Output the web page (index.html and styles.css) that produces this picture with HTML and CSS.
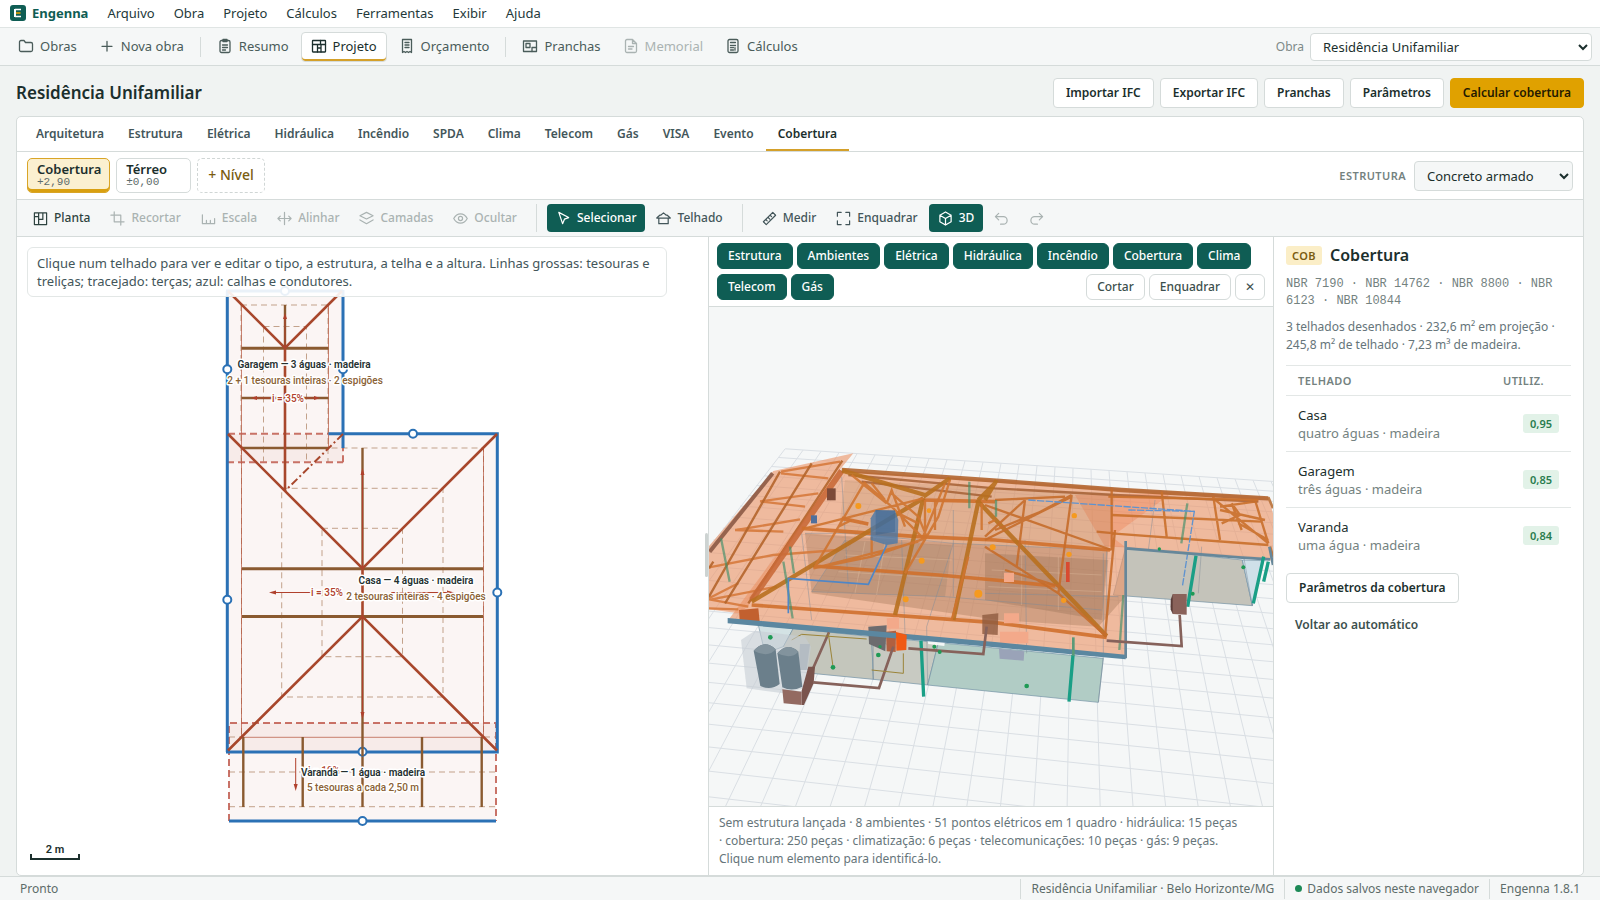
FILE: index.html
```html
<!DOCTYPE html>
<html lang="pt-BR">
<head>
<meta charset="utf-8">
<title>Engenna — Residência Unifamiliar</title>
<link rel="stylesheet" href="styles.css">
</head>
<body>
<div class="app">
  <nav class="menubar">
    <a class="brand" href="#"><svg class="logo" viewBox="0 0 16 16"><rect width="16" height="16" rx="3" fill="#0f5d54"/><path d="M5 4v8" stroke="#fff" stroke-width="2"/><path d="M5 4.500h6M5 11.500h6" stroke="#fff" stroke-width="1.500"/><path d="M6 8h4.500" stroke="#e0a100" stroke-width="1.600"/></svg>Engenna</a>
    <button>Arquivo</button><button>Obra</button><button>Projeto</button><button>Cálculos</button><button>Ferramentas</button><button>Exibir</button><button>Ajuda</button>
  </nav>

  <header class="toolbar">
    <button class="tool"><svg viewBox="0 0 16 16"><path d="M1.500 4a1.500 1.500 0 0 1 1.500-1.500h3l1.500 2H13A1.500 1.500 0 0 1 14.500 6v6a1.500 1.500 0 0 1-1.500 1.500H3A1.500 1.500 0 0 1 1.500 12z"/></svg>Obras</button>
    <button class="tool"><svg viewBox="0 0 16 16"><path d="M8 3.500v9.500M3 8.300h10"/></svg>Nova obra</button>
    <span class="sep"></span>
    <button class="tool"><svg viewBox="0 0 16 16"><rect x="3" y="2.500" width="10" height="12" rx="1.500"/><path d="M6 1.500h4v2H6zM5.500 7h5M5.500 9.500h5M5.500 12h3"/></svg>Resumo</button>
    <button class="tool active"><svg viewBox="0 0 16 16"><rect x="1.500" y="2.500" width="13" height="11.500" rx=".5"/><path d="M1.500 6.500h13M6.500 6.500V14M9.500 2.500v4M6.500 10h3.500M10 6.500V14"/></svg>Projeto</button>
    <button class="tool"><svg viewBox="0 0 16 16"><path d="M3.500 1.500h9v13l-1.500-1-1.500 1-1.500-1-1.500 1-1.500-1-1.500 1zM6 4.500h4M6 7h4M6 9.500h4"/></svg>Orçamento</button>
    <span class="sep"></span>
    <button class="tool"><svg viewBox="0 0 16 16"><rect x="1.500" y="3" width="13" height="10.500"/><path d="M4 5.500h4v4H4zM10 13.500v-4h4.500"/></svg>Pranchas</button>
    <button class="tool" disabled><svg viewBox="0 0 16 16"><path d="M2.500 3a1.500 1.500 0 0 1 1.500-1.500h5.500l4 4V13a1.500 1.500 0 0 1-1.500 1.500H4A1.500 1.500 0 0 1 2.500 13zM9.500 1.500v4h4M5.500 8.500h5M5.500 11h3.500"/></svg>Memorial</button>
    <button class="tool"><svg viewBox="0 0 16 16"><rect x="3" y="1.500" width="10" height="13" rx="1.500"/><path d="M5.500 4.500h5M5.500 7.500h1M7.500 7.500h1M9.500 7.500h1M5.500 9.700h1M7.500 9.700h1M10 9.700v2.500M5.500 12h3"/></svg>Cálculos</button>
    <label class="obra-label" for="obra">Obra</label>
    <select id="obra" class="obra-select"><option>Residência Unifamiliar</option></select>
  </header>

  <main class="page">
    <div class="page-head">
      <h1>Residência Unifamiliar</h1>
      <button class="btn">Importar IFC</button><button class="btn">Exportar IFC</button><button class="btn">Pranchas</button><button class="btn">Parâmetros</button><button class="btn primary">Calcular cobertura</button>
    </div>

    <section class="card">
      <div class="tabs">
        <button>Arquitetura</button><button>Estrutura</button><button>Elétrica</button><button>Hidráulica</button><button>Incêndio</button><button>SPDA</button><button>Clima</button><button>Telecom</button><button>Gás</button><button>VISA</button><button>Evento</button><button class="on">Cobertura</button>
      </div>

      <div class="levels">
        <button class="level on"><b>Cobertura</b><span>+2,90</span></button>
        <button class="level"><b>Térreo</b><span>±0,00</span></button>
        <button class="level-add">+ Nível</button>
        <label class="caps levels-label" for="estrutura">Estrutura</label>
        <select id="estrutura" class="estrutura-select"><option>Concreto armado</option></select>
      </div>

      <div class="tools">
        <button class="strong"><svg viewBox="0 0 16 16"><path d="M1.500 2h13v12.500h-13zM6 2v12.500M6 9h4.500V2M1.500 6H6"/></svg>Planta</button>
        <button disabled><svg viewBox="0 0 16 16"><path d="M4.500 1v10.500H15M1 4.500h10.500V15"/></svg>Recortar</button>
        <button disabled><svg viewBox="0 0 16 16"><path d="M1.500 4v9.500h13V8M5.800 13.500V10M10 13.500V10"/></svg>Escala</button>
        <button disabled><svg viewBox="0 0 16 16"><path d="M8 1.500v13M1 8h14M3.500 5.500 1 8l2.500 2.500M12.500 5.500 15 8l-2.500 2.500"/></svg>Alinhar</button>
        <button disabled><svg viewBox="0 0 16 16"><path d="M8 1.500 15 5 8 8.500 1 5zM1 9.500l7 4 7-4"/></svg>Camadas</button>
        <button disabled><svg viewBox="0 0 16 16"><path d="M.8 8S3.500 3 8 3s7.200 5 7.200 5-2.700 5-7.200 5S.8 8 .8 8z"/><circle cx="8" cy="8" r="2.200"/></svg>Ocultar</button>
        <span class="sep"></span>
        <button class="on"><svg viewBox="0 0 16 16"><path d="M3 1.500 13.500 7 9 8.700 7 13.500z"/></svg>Selecionar</button>
        <button><svg viewBox="0 0 16 16"><path d="M.8 7.500 4 4.500h1L8 2l3 2.500h1l3.200 3zM3 7.500v6h10v-6"/></svg>Telhado</button>
        <span class="sep"></span>
        <button><svg viewBox="0 0 16 16"><path d="m1.500 11.500 10-10 3 3-10 10zM4 9l1.500 1.500M6.300 6.700l2 2M8.700 4.500 10.200 6"/></svg>Medir</button>
        <button><svg viewBox="0 0 16 16"><path d="M1.500 5.500v-4h4M10.500 1.500h4v4M14.500 10.500v4h-4M5.500 14.500h-4v-4"/></svg>Enquadrar</button>
        <button class="on"><svg viewBox="0 0 16 16"><path d="m8 1 6 3.500v7L8 15l-6-3.500v-7zM2 4.500 8 8l6-3.500M8 8v7"/></svg>3D</button>
        <button disabled aria-label="Desfazer"><svg viewBox="0 0 16 16"><path d="M5 2.500 1.500 6 5 9.500M1.500 6H10a4 4 0 0 1 0 8H7"/></svg></button>
        <button disabled aria-label="Refazer"><svg viewBox="0 0 16 16"><path d="M11 2.500 14.500 6 11 9.500M14.500 6H6a4 4 0 0 0 0 8h3"/></svg></button>
      </div>

      <div class="work">
        <div class="plan">
          <svg class="plan-svg" viewBox="17 237 691 638" preserveAspectRatio="xMinYMin meet">
            <g class="fill"><path d="M227 291h116v171H227zM227 434h270v318H227zM229 723h267v98H229z"/><path d="M227 434h116v28H227zM229 723h267v29H229z"/></g>
            <g class="purlin">
              <path d="M241 305h87v157M241 305v157M263.500 326.500h43v135M263.500 326.500v135"/>
              <path d="M241.500 448h242v289M241.500 448v289M281.700 488.300H443V697H281.700zM322 528.300h80.500v128.400H322z"/>
              <path d="M229 737h13M484 737h12M229 772h267M229 806.700h267"/>
            </g>
            <path class="thin" d="M241.500 448v289M483.500 448v289M241.500 305v143M328.500 305v143M241.500 737.300h242"/>
            <path class="eave" d="M228 433.700h100M227 462.300h116M343 462.300V448M229 821v-98h267v98"/>
            <path class="gutter" d="M227.300 291v461M226 291h117M343 290v158M328.500 433.700h168.800V752H226M229 821h267"/>
            <path class="truss3" d="M241.500 348.300h87M242 568.700h241M242 616.500h241"/>
            <path class="truss2" d="M285 305v43M241.500 398h87M241.500 448h87M362.500 448v121M362.500 616v121"/>
            <path class="truss2" d="M243.300 737v70M302.700 737v70M362.500 737v70M422 737v70M481.700 737v70"/>
            <path class="hip" d="m228 291 57 57 57-57M228 434l134.500 134.500L497 434M228 750.500l134.500-134L497 750.500M285 348v143M362.500 568v48"/>
            <path class="valley" d="m343 434-58 57"/>
            <path class="slope" d="M311 592.500h-36M391 592.500h58M362.500 568v-94M362.500 616v96M295.700 758v28M285 348v-30M272 398h-15M304 398h10"/>
            <path class="head" d="m269 592.500 7-2v4zM454 592.500l-7-2v4zM362.500 468l-2 7h4zM362.500 719l-2-7h4zM295.700 791l-2-7h4zM285 313l-2 6h4zM251 398l6-2v4zM320 398l-6-2v4z"/>
            <g class="knob"><circle cx="285" cy="291" r="4"/><circle cx="227.300" cy="369.300" r="4"/><circle cx="343" cy="369.300" r="4"/><circle cx="413" cy="433.700" r="4"/><circle cx="227.300" cy="599.700" r="4"/><circle cx="497.300" cy="592.500" r="4"/><circle cx="362.500" cy="751.700" r="4"/><circle cx="362.500" cy="821" r="4"/></g>
            <path class="truss1" d="M362.500 747v9"/>
            <g class="tag">
              <text class="inc" x="288" y="402">i = 35%</text>
              <text class="inc" x="327" y="596">i = 35%</text>
              <text class="inc" x="324" y="774">i = 10%</text>
              <text class="name" x="304" y="368">Garagem — 3 águas · madeira</text>
              <text class="sub" x="305" y="384">2 + 1 tesouras inteiras · 2 espigões</text>
              <text class="name" x="416" y="584">Casa — 4 águas · madeira</text>
              <text class="sub" x="416" y="600">2 tesouras inteiras · 4 espigões</text>
              <text class="name" x="363" y="776">Varanda — 1 água · madeira</text>
              <text class="sub" x="363" y="791">5 tesouras a cada 2,50 m</text>
            </g>
            <path class="ruler" d="M31 854v5h48v-5"/><text class="ruler-text" x="55" y="853">2 m</text>
          </svg>
          <p class="hint">Clique num telhado para ver e editar o tipo, a estrutura, a telha e a altura. Linhas grossas: tesouras e treliças; tracejado: terças; azul: calhas e condutores.</p>
          <span class="grip"></span>
        </div>

        <div class="view3d">
          <div class="chips">
            <button class="chip on">Estrutura</button><button class="chip on">Ambientes</button><button class="chip on">Elétrica</button><button class="chip on">Hidráulica</button><button class="chip on">Incêndio</button><button class="chip on">Cobertura</button><button class="chip on">Clima</button><button class="chip on">Telecom</button><button class="chip on">Gás</button><button class="chip push">Cortar</button><button class="chip">Enquadrar</button><button class="chip close" aria-label="Fechar">✕</button>
          </div>
          <div class="scene-wrap">
          <svg class="scene" viewBox="12 -399 1692 1497" preserveAspectRatio="xMidYMid slice">
            <path id="grid" fill="none" stroke="#dadfe4" stroke-width="3"/>
            <g stroke="#6f8fa3" stroke-width="2">
              <path fill="#d3e2e4" d="M160 555 265 565 235 620 180 640z"/>
              <path fill="#c4c6bc" d="M265 565 500 590 505 718 320 700 235 620z"/>
              <path fill="#c8cac2" d="M500 590 700 608 668 735 505 718z"/>
              <path fill="#b1ccc5" d="M700 608 1195 655 1180 787 668 735z"/>
              <path fill="#c4c3ba" d="M1262 322 1612 360 1642 497 1225 465z"/>
              <path fill="#cfe0e9" d="M1612 360 1676 362 1642 497z"/>
            </g>
            <g fill="#eb9468" fill-opacity=".62">
              <path d="M205 93 445 40 402 92 128 500 100 520 12 508V318z"/>
              <path d="M402 92 875 120 1225 145 1690 172 1704 220V362L1262 322V655L70 540z"/>
            </g>
            <path fill="#f07c4a" fill-opacity=".35" d="M1110 165 1400 160 1220 290 1262 322 1200 320z"/>
            <path fill="#9c6f50" fill-opacity=".34" d="M300 280 745 310 1210 330 1195 465 1262 468 1180 560 880 540 320 460z"/>
            <path fill="#9c7a50" fill-opacity=".16" d="M420 120 1230 160 1210 330 745 310 400 280z"/>
            <path fill="#8d7663" fill-opacity=".25" d="M420 300 740 315 720 470 320 455z"/>
            <path fill="#8d6a50" fill-opacity=".3" d="M840 340 1210 360 1190 540 840 480z"/>
            <g fill="none" stroke="#7d8b98" stroke-width="2" stroke-opacity=".7">
              <path d="M300 280h130l315 30 460 20v250M320 455l400 15 470 40M420 300l-100 155M745 310 665 560 668 735M590 300l10 280M290 280l30 260M745 210v260M410 110l20 330M505 590v128M1195 340v310l-15 137M960 300l5 340M1616 350 1642 497"/>
              <path d="M1350 180 1330 330M1490 320 1480 460M840 460l400 10M555 620l-55-40"/>
            </g>
            <g fill="none" stroke="#e6c6a8" stroke-width="2" stroke-opacity=".5"><path d="M420 345l320 15M400 395l330 20M480 305l-30 155M540 305l-25 160M860 390l330 15M850 440l340 15M950 345v150M1060 350v160"/></g>
            <g class="beams">
              <path stroke="#8c5a45" stroke-width="12" d="M14 335 203 100"/>
              <path stroke="#d67a3c" d="M12 382 205 345 400 330M95 270 285 238M165 184 340 160M228 95 405 65M12 478 130 500M12 505 100 508M20 478 215 440M90 270 235 275M165 184 300 200M228 100 370 115M12 475 100 430"/>
              <path stroke="#b4652b" d="M12 470 225 95M60 490 320 70M12 385 25 365M130 490 412 62"/>
              <path stroke="#c96a38" stroke-width="18" d="M140 480 410 92"/>
              <path stroke="#b3652f" stroke-width="13" d="M410 90 875 122 1250 150 1690 175"/>
              <path stroke="#a8653a" d="M430 105 870 145 1230 165 1660 185M470 125 860 170"/>
              <path stroke="#cf702c" stroke-width="11" d="M140 495 870 548 1205 592M290 265 640 290 870 300 1215 330M325 378 700 405 870 420 1050 438M410 235 490 252M650 180 870 185"/>
              <path stroke="#b8701f" stroke-width="13" d="M140 485 655 175M655 170 735 115M655 175 570 525M820 185 745 540M820 180 870 130M815 180 1205 588M412 92 660 165M840 180 875 120"/>
              <path stroke="#cf7430" d="M325 385 640 305M325 385 500 350 660 295M300 265 655 175M330 380 480 125M400 260 440 240M440 105 545 190M480 130 560 200M500 130 540 180M545 190 560 150 600 260M560 160 640 230 665 290M560 200 650 290M660 180V290M690 180 690 270M600 400 700 230 735 120M830 190V270M790 350 740 540M850 250 870 240M500 290V350M580 220 640 250M720 130 650 300"/>
              <path stroke="#c56d2b" d="M840 290 960 180M960 180 935 380M1100 165 1060 460M1100 170 840 300M1100 165 960 240M840 195 1220 330M870 180 1080 170M840 320 1060 460 1205 590M900 390 1065 440M870 270 1020 210M1230 270 1200 588M1220 145V330M1175 275 1230 280"/>
              <path stroke="#c9702b" d="M1220 225 1670 245M1220 280 1690 315M1370 155 1385 290M1525 170 1545 300M1525 175 1690 310M1650 180 1690 310M1545 200 1650 185M1545 210 1680 240M1550 250 1605 225 1580 190 1610 270M1600 250 1690 300M1210 170 1660 180"/>
              <path stroke="#b97036" stroke-width="8" d="M1690 172 1704 205M1695 320 1704 350"/>
            </g>
            <g fill="none" stroke="#3f8f6a" stroke-opacity=".65" stroke-width="7"><path d="M48 295 74 425M235 365l28 170M255 320l12 80M793 125v80M1447 190l-18 120M1255 465l-12 165M873 180v50"/></g>
            <path fill="none" stroke="#4f86c6" stroke-width="5" d="M250 520V415L490 433 545 315"/>
            <path fill="none" stroke="#5f93cf" stroke-width="4" stroke-dasharray="22 4" d="M970 180 1468 214 1432 440M1270 210 1468 214"/>
            <path fill="#4a78a8" fill-opacity=".8" d="M497 235 512 210 570 212 580 240 578 310 545 315 497 300z"/><path fill="#345f8c" fill-opacity=".4" d="M512 210h58v65l-58 10z"/>
            <g fill="#7d4a38"><path d="M366 145h26v36h-26z"/><path fill="#4f6f9c" d="M318 226h18v24h-18z"/></g>
            <g fill="#f59a1f"><circle cx="460" cy="198" r="9"/><circle cx="650" cy="362" r="9"/><circle cx="820" cy="461" r="12"/><circle cx="602" cy="478" r="9"/><circle cx="863" cy="322" r="9"/><circle cx="1108" cy="227" r="8"/><circle cx="1092" cy="343" r="8"/><circle cx="1076" cy="481" r="8"/><circle cx="672" cy="212" r="7"/></g>
            <path fill="#d94a30" d="M1083 366h11v60h-11z"/>
            <path fill="#c2602f" d="M102 510 160 505 164 545 104 540z"/>
            <path fill="#f3a98a" d="M545 535 582 532 582 566 547 566zM897 398h30v28h-30zM897 520h45v30h-45zM885 575h85v35h-85z"/>
            <path fill="#8f5b40" fill-opacity=".8" d="M832 525 880 520 878 585 832 582z"/>
            <path fill="#6c6c6f" d="M490 560 545 556 541 634 492 612z"/><path fill="#b06040" d="M543 575 573 572 572 636 545 634z"/>
            <path fill="#fff" fill-opacity=".85" d="M665 590 720 600 718 618 670 612z"/>
            <path fill="#9aa3b8" d="M882 626 958 634 956 662 884 656z"/>
            <path fill="#5b87a0" d="M68 534 870 606 1262 644V658L870 622 68 550z"/>
            <path fill="none" stroke="#66879a" stroke-width="8" d="M1262 303V655M1262 325 1600 352 1695 358M1693 320 1704 375"/>
            <g fill="none" stroke="#1a9f86" stroke-width="10"><path d="M648 602 656 770M1104 645 1092 785M1473 347 1448 500M1676 350 1645 490M1690 365 1676 425"/></g>
            <path fill="none" stroke="#5b9a78" stroke-width="8" d="M1105 592v55"/>
            <g fill="none" stroke="#86625b" stroke-width="8"><path d="M372 577 322 690M325 727 522 744 565 620M610 625 835 642 845 560M1205 602 1430 618 1424 525"/></g>
            <path fill="none" stroke="#9b8438" stroke-width="3" d="M260 600 290 583 485 597M370 580 384 680M500 690 595 700V640"/>
            <path fill="#c7cdd3" fill-opacity=".6" d="M108 600 150 572 300 590 318 620 300 745 235 760 125 745z"/>
            <path fill="#b4bcc3" d="M285 612 315 612 305 690 280 690z"/>
            <path fill="#7a544d" d="M290 752 310 680 330 680 326 730 297 795 290 795z"/><path fill="#936a61" d="M232 748 290 755 290 795 236 790z"/>
            <path fill="#6b7f8b" d="M146 632Q178 596 212 628L224 732Q198 752 166 738zM217 640Q248 605 280 635L292 740Q262 756 232 742z"/>
            <path fill="#82939d" d="M146 632Q178 596 212 628 190 655 146 632zM217 640Q248 605 280 635 258 660 217 640z"/>
            <path fill="#f05a14" d="M573 576 605 584 604 630 574 632z"/>
            <path fill="#8a625a" d="M1403 462 1445 462 1445 524 1403 522 1397 500z"/><path fill="#5b3d39" d="M1397 480 1403 462V522L1397 508z"/>
            <g fill="#1f9a55"><circle cx="196" cy="592" r="7"/><circle cx="384" cy="682" r="7"/><circle cx="520" cy="645" r="7"/><circle cx="525" cy="620" r="5"/><circle cx="688" cy="620" r="6"/><circle cx="704" cy="636" r="6"/><circle cx="965" cy="738" r="7"/><circle cx="1463" cy="461" r="6"/><circle cx="1615" cy="382" r="6"/><circle cx="1363" cy="327" r="5"/></g>
          </svg>
          </div>
          <p class="summary">Sem estrutura lançada · 8 ambientes · 51 pontos elétricos em 1 quadro · hidráulica: 15 peças · cobertura: 250 peças · climatização: 6 peças · telecomunicações: 10 peças · gás: 9 peças. Clique num elemento para identificá-lo.</p>
        </div>

        <aside class="panel">
          <h2><span class="code">COB</span>Cobertura</h2>
          <p class="norms">NBR 7190 · NBR 14762 · NBR 8800 · NBR 6123 · NBR 10844</p>
          <p class="totals">3 telhados desenhados · 232,6 m² em projeção · 245,8 m² de telhado · 7,23 m³ de madeira.</p>
          <table>
            <thead><tr><th class="caps">Telhado</th><th class="caps">Utiliz.</th></tr></thead>
            <tbody>
              <tr><td>Casa<small>quatro águas · madeira</small></td><td><span class="ok">0,95</span></td></tr>
              <tr><td>Garagem<small>três águas · madeira</small></td><td><span class="ok">0,85</span></td></tr>
              <tr><td>Varanda<small>uma água · madeira</small></td><td><span class="ok">0,84</span></td></tr>
            </tbody>
          </table>
          <button class="btn">Parâmetros da cobertura</button>
          <button class="btn ghost">Voltar ao automático</button>
        </aside>
      </div>
    </section>
  </main>

  <footer class="status">
    <span class="state">Pronto</span><span>Residência Unifamiliar · Belo Horizonte/MG</span><span><i class="dot"></i>Dados salvos neste navegador</span><span>Engenna 1.8.1</span>
  </footer>
</div>
<script src="grid.js"></script>
</body>
</html>
```

FILE: styles.css
```css
* { box-sizing: border-box; }
body { margin: 0; font: 13px/18px "Noto Sans", sans-serif; color: #1b2f2d; background: #f0f3f2; }
button, select { font: inherit; color: inherit; }
button { background: none; border: 0; padding: 0; margin: 0; white-space: nowrap; }
p, h1, h2 { margin: 0; }
.app { height: 100vh; display: flex; flex-direction: column; }
svg { display: block; }

.menubar { display: flex; align-items: center; gap: 1px; height: 28px; padding: 0 0 1px 10px; background: #fff; border-bottom: 1px solid #e0e5e4; flex: none; }
.brand { display: flex; align-items: center; gap: 6px; font-weight: 700; color: #0f5d54; text-decoration: none; margin-right: 9px; }
.logo { width: 16px; height: 16px; }
.menubar button { padding: 0 9px; color: #24393a; }

.toolbar { display: flex; align-items: center; gap: 2px; height: 38px; padding: 0 8px; background: #f5f7f7; border-bottom: 1px solid #d5dbda; flex: none; }
.tool { display: flex; align-items: center; gap: 6px; height: 30px; padding: 0 9px 2px; border: 1px solid transparent; border-radius: 4px; color: #4a5c5a; }
.tool svg { width: 16px; height: 16px; }
.tool svg, .tools svg { fill: none; stroke: currentColor; stroke-width: 1.3; stroke-linejoin: round; stroke-linecap: round; }
.tool.active { background: #fff; border-color: #d5dbda; color: #1b2f2d; box-shadow: inset 0 -2px #d4a02a; }
.tool:disabled, .tools button:disabled { color: #aab3b2; }
.sep { width: 1px; height: 20px; margin: 0 4px; background: #d5dbda; }
.obra-label { margin-left: auto; margin-right: 4px; font-size: 12px; color: #7d8a88; }
select { border: 1px solid #d5dbda; border-radius: 4px; background-color: #fff; padding: 0 8px; }
.obra-select { width: 282px; height: 28px; }

.page { flex: 1; min-height: 0; display: flex; flex-direction: column; padding: 12px 16px 0; }
.page-head { display: flex; align-items: center; gap: 6px; height: 30px; margin-bottom: 8px; }
h1 { font-size: 17px; line-height: 24px; font-weight: 600; margin-right: auto; }
.btn { height: 30px; padding: 0 12px; background: #fff; border: 1px solid #d5dbda; border-radius: 4px; font-size: 12px; font-weight: 600; }
.btn.primary { background: #e0a100; border-color: #e0a100; color: #241a00; }
.btn.ghost { background: none; border-color: transparent; padding: 0 8px; color: #3c4f4d; }

.card { flex: 1; min-height: 0; display: flex; flex-direction: column; background: #fff; border: 1px solid #d5dbda; border-radius: 5px; overflow: hidden; }
.tabs { display: flex; height: 35px; padding: 0 7px; border-bottom: 1px solid #d5dbda; flex: none; }
.tabs button { padding: 0 12px; font-size: 12px; font-weight: 600; color: #43565a; }
.tabs .on { color: #1b2f2d; box-shadow: inset 0 -2px #d4a02a; }

.levels { display: flex; align-items: center; gap: 6px; height: 48px; padding: 0 10px; border-bottom: 1px solid #d5dbda; flex: none; }
.level { display: flex; flex-direction: column; align-items: flex-start; min-width: 75px; height: 35px; padding: 3px 8px 0 9px; border: 1px solid #d5dbda; border-radius: 5px; line-height: 14px; }
.level b { font-weight: 600; }
.level span { font: 11px/13px "Liberation Mono", monospace; color: #5d6c6a; }
.level.on { background: #fbf0d0; border-color: #d9a527; box-shadow: inset 0 -3px #d9a011; }
.level-add { height: 35px; padding: 0 10px 2px; border: 1px dashed #d0d6d5; border-radius: 5px; font-size: 14px; font-weight: 500; color: #7a5c10; }
.caps { font-size: 11px; font-weight: 600; text-transform: uppercase; letter-spacing: .04em; color: #74827f; }
.levels-label { margin-left: auto; margin-right: 2px; }
.estrutura-select { width: 159px; height: 30px; background-color: #f5f7f7; }

.tools { display: flex; align-items: center; gap: 2px; height: 37px; padding: 0 7px; background: #f5f7f7; border-bottom: 1px solid #d5dbda; flex: none; }
.tools button { display: flex; align-items: center; gap: 6px; height: 28px; padding: 0 9px; border-radius: 4px; font-size: 12px; font-weight: 500; color: #43565a; }
.tools svg { width: 15px; height: 15px; }
.tools .strong { color: #2e4340; }
.tools .on { background: #0f5d54; color: #fff; }
.tools .sep { height: 28px; margin: 0 8px; }

.work { flex: 1; min-height: 0; display: grid; grid-template-columns: minmax(0, 1fr) 565px 310px; }
.plan { position: relative; min-height: 0; overflow: hidden; }
.plan-svg { width: 100%; height: 100%; }
.hint { position: absolute; left: 10px; top: 10px; width: 640px; padding: 6px 9px; border: 1px solid #e3e7e6; border-radius: 6px; background: rgba(255, 255, 255, .9); color: #43565a; }
.grip { position: absolute; right: 0; top: 296px; width: 3px; height: 44px; background: #cdd3d2; border-radius: 2px; }

.plan-svg path { fill: none; }
.plan-svg .fill path { fill: #b4412a; fill-opacity: .05; }
.purlin path { stroke: #b58d70; stroke-opacity: .8; stroke-dasharray: 6 4; }
.plan-svg .thin { stroke: #b4523a; stroke-opacity: .7; }
.eave { stroke: #c05a4e; stroke-width: 2; stroke-dasharray: 7 4; stroke-opacity: .85; }
.gutter { stroke: #2b71b5; stroke-width: 3; }
.truss3 { stroke: #8a5a30; stroke-width: 3; }
.truss2, .truss1 { stroke: #8a5a30; stroke-width: 2.4; }
.hip { stroke: #a8472c; stroke-width: 2.6; }
.valley { stroke: #a8472c; stroke-width: 2; stroke-dasharray: 8 3 2 3; }
.slope { stroke: #b0402c; }
.plan-svg .head { fill: #b0402c; }
.knob circle { fill: #fff; stroke: #2b71b5; stroke-width: 2; }
.tag text { font-family: Roboto, sans-serif; font-size: 10px; text-anchor: middle; paint-order: stroke; stroke: #fff; stroke-width: 3; stroke-linejoin: round; }
.tag .name { font-weight: 600; fill: #24302f; }
.tag .sub { font-weight: 500; fill: #8a6134; }
.tag .inc { font-weight: 500; fill: #b0402c; }
.ruler { stroke: #1b2f2d; stroke-width: 2; }
.ruler-text { font: 600 11px Roboto, sans-serif; text-anchor: middle; fill: #1b2f2d; }

.view3d { display: flex; flex-direction: column; min-height: 0; border-left: 1px solid #d5dbda; }
.chips { display: flex; flex-wrap: wrap; gap: 5px 4px; padding: 6px 8px; border-bottom: 1px solid #d5dbda; }
.chip { height: 26px; padding: 0 10px; border: 1px solid #d5dbda; border-radius: 6px; font-size: 12px; font-weight: 500; color: #3c4f4d; }
.chip.on { background: #0f5d54; border-color: #0f5d54; color: #fff; }
.chip.push { margin-left: auto; }
.chip.close { padding: 0 9px; }
.scene-wrap { flex: 1; min-height: 0; background: #f5f7f7; }
.scene { width: 100%; height: 100%; }
.beams { fill: none; stroke-width: 7; stroke-opacity: .9; }
.summary { padding: 7px 30px 7px 10px; border-top: 1px solid #d5dbda; font-size: 12px; color: #66757a; }

.panel { padding: 9px 12px; border-left: 1px solid #d5dbda; }
h2 { display: flex; align-items: center; gap: 8px; font-size: 16px; line-height: 19px; font-weight: 600; }
.code { padding: 0 6px; font-size: 11px; line-height: 19px; border-radius: 3px; background: #fbeec7; color: #7a5c10; letter-spacing: .04em; }
.norms { margin-top: 11px; font: 12px/17px "Liberation Mono", monospace; color: #74827f; }
.totals { margin-top: 8px; font-size: 12px; color: #66757a; }
table { width: 100%; margin: 11px 0 9px; border-collapse: collapse; border-top: 1px solid #e3e7e6; }
th { height: 30px; padding: 0 12px; text-align: left; }
td { height: 56px; padding: 0 12px; border-top: 1px solid #e3e7e6; }
td + td { text-align: right; }
th + th, td + td { width: 80px; }
small { display: block; font-size: 13px; color: #74827f; }
.ok { display: inline-block; padding: 0 7px; font-size: 11px; line-height: 19px; font-weight: 600; border-radius: 3px; background: #e2f2e8; color: #2a7d4f; }
.panel .btn { display: block; }
.panel .ghost { margin-top: 7px; }

.status { display: flex; align-items: center; height: 24px; padding: 0 10px; background: #f5f7f7; border-top: 1px solid #d5dbda; font-size: 12px; color: #5d6c6a; flex: none; }
.status span { display: flex; align-items: center; gap: 5px; padding: 0 10px; border-left: 1px solid #d5dbda; height: 20px; }
.status .state { margin-right: auto; border: 0; }
.dot { width: 7px; height: 7px; border-radius: 50%; background: #1d8a57; }
```

FILE: grid.js
```js
// Ground grid of the 3D view, in the scene's own units.
// Depth lines meet at (1125, -1124); cross lines spread out towards the viewer.
const out = [];
for (let i = -1; i < 28; i++) {
  const x = 240 + i * 54;
  const y = 27 + i * 3.6;
  if (i < 0) continue;
  const k = 2500 / (y + 1124);
  out.push(`M${x} ${y}L${1125 + (x - 1125) * k} ${y + (y + 1124) * (k - 1)}`);
}
for (let n = 0; n < 26; n++) {
  const y = -1449 + 80700 / (54.7 - n);
  const slope = 0.067 + 0.048 * (y - 27) / 1071;
  const left = 240 - 0.74 * (y - 27);
  out.push(`M${left} ${y + slope * (left - 240)}L1750 ${y + slope * 1510}`);
}
document.getElementById('grid').setAttribute('d', out.join(''));
```
